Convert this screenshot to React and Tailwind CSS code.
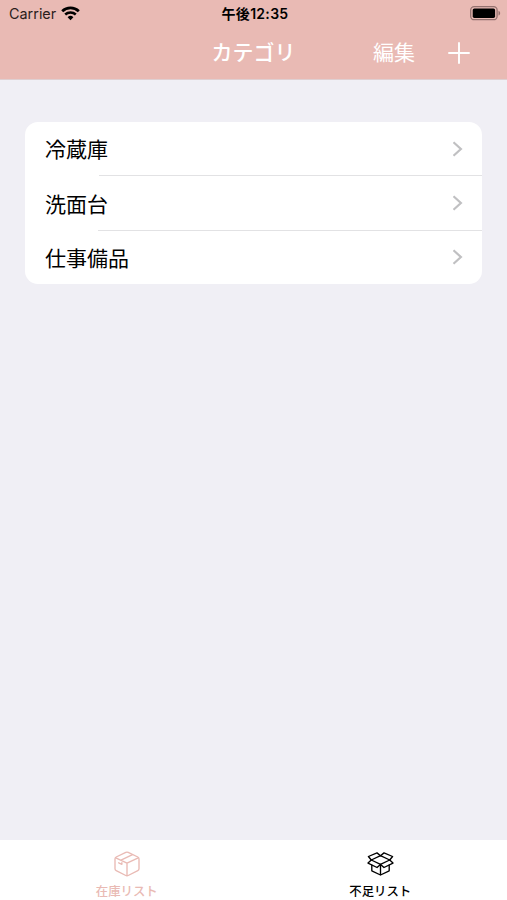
import React, { useState } from "react";

const categories = [
  { id: 1, name: "冷蔵庫", line: "ml-[74px]" },
  { id: 2, name: "洗面台", line: "ml-[73px]" },
  { id: 3, name: "仕事備品", line: "" },
];

const WifiIcon = () => (
  <svg width="19" height="15" viewBox="0 0 19 15" fill="none" stroke="#000">
    <path d="M1.2 5.2a12 12 0 0 1 16.6 0" strokeWidth="2.8" />
    <path d="M4.2 8.5a7.8 7.8 0 0 1 10.6 0" strokeWidth="2.5" />
    <path d="M9.5 14.2 6.6 11.2a4.2 4.2 0 0 1 5.8 0Z" fill="#000" stroke="none" />
  </svg>
);

const BatteryIcon = () => (
  <svg width="31" height="15" viewBox="0 0 31 15" fill="none">
    <rect x="0.7" y="0.7" width="26.4" height="13" rx="3.5" stroke="#94716f" strokeWidth="1.3" />
    <rect x="2.7" y="2.5" width="22.4" height="9.4" rx="1.6" fill="#000" />
    <path d="M28.5 4.8c2.2 1 2.2 3.9 0 4.8Z" fill="#94716f" />
  </svg>
);

const BoxIcon = () => (
  <svg width="26" height="26" viewBox="0 0 26 26" fill="none" stroke="currentColor" strokeWidth="1.35" strokeLinejoin="round" strokeLinecap="round">
    <path d="M11.8 1.4Q13 .8 14.2 1.4L23.8 6Q25 6.6 25 8V17.8Q25 19 23.8 19.6L14.2 24.5Q13 25.1 11.8 24.5L2.2 19.6Q1 19 1 17.8V8Q1 6.6 2.2 6Z" />
    <path d="M1.8 6.9 13 12.1 24.2 6.9M13 12.1V24.5M7 9.2 18.5 3.7M4.7 11.8l3.2 1.5v-1.6" />
  </svg>
);

const OpenBoxIcon = () => (
  <svg width="27" height="24" viewBox="0 0 27 24" fill="none" stroke="currentColor" strokeWidth="1.35" strokeLinejoin="round" strokeLinecap="round">
    <path d="M13.5 3.7 22.7 8 13.5 12.4 4.3 8Z" />
    <path d="M4.3 8 1.4 4.5 10 .9 13.5 3.7 17 .9 25.6 4.5 22.7 8" />
    <path d="M4.3 8 1 11.1 10 15.5 13.5 12.4 17 15.5 26 11.1 22.7 8" />
    <path d="M4.8 13.2V18.8L13.5 23 22.2 18.8V13.2M13.5 12.4V23" />
  </svg>
);

const App = () => {
  const [activeTab, setActiveTab] = useState("stock");

  return (
    <div className="flex h-screen w-full flex-col bg-[#f0eff5] font-['Inter','Noto_Sans_CJK_JP',sans-serif]">
      <header className="h-20 shrink-0 border-b border-[#dfcfd1] bg-[#e9bab4]">
        <div className="grid h-[27px] grid-cols-3 items-center pl-[9px] pr-[6px] text-black">
          <div className="flex items-center gap-[5px]">
            <span className="pt-px text-[14.4px] leading-none text-[#2b1d1b]">Carrier</span>
            <WifiIcon />
          </div>
          <span className="whitespace-nowrap pt-px text-center text-[14px] font-semibold leading-none tracking-[0.3px]">
            午後12:35
          </span>
          <div className="flex justify-end">
            <BatteryIcon />
          </div>
        </div>
        <div className="grid h-[51px] grid-cols-3 items-center text-white">
          <span />
          <h1 className="text-center text-[21px] font-medium leading-none">カテゴリ</h1>
          <div className="flex items-center justify-end gap-[33px] pr-[37px]">
            <button className="text-[21px] leading-none">編集</button>
            <button aria-label="追加">
              <svg width="22" height="22" viewBox="0 0 22 22" stroke="currentColor" strokeWidth="1.9" strokeLinecap="round">
                <path d="M11 1v20M1 11h20" />
              </svg>
            </button>
          </div>
        </div>
      </header>

      <main className="flex-1 px-[25px] pt-[42px]">
        <ul className="overflow-hidden rounded-[13px] bg-white">
          {categories.map((item) => (
            <li key={item.id}>
              <div className="flex h-[53.4px] items-center justify-between pl-[20px] pr-[19px]">
                <span className="pt-[2px] text-[21px] leading-none text-black">{item.name}</span>
                <svg width="11" height="16" viewBox="0 0 11 16" fill="none" stroke="#c0c0c2" strokeWidth="2.2">
                  <path d="M1.5 1.3 8.9 8l-7.4 6.7" />
                </svg>
              </div>
              {item.line && <div className={`h-px bg-[#e2e2e4] ${item.line}`} />}
            </li>
          ))}
        </ul>
      </main>

      <nav className="grid h-[60px] shrink-0 grid-cols-2 bg-white text-[12.4px] font-medium">
        <button
          onClick={() => setActiveTab("stock")}
          className={`flex flex-col items-center pt-[10px] ${
            activeTab === "stock" ? "text-[#e9bab4]" : "text-black"
          }`}
        >
          <span className="flex h-[27px] items-center">
            <BoxIcon />
          </span>
          <span className="mt-[9px] leading-none">在庫リスト</span>
        </button>
        <button
          onClick={() => setActiveTab("shortage")}
          className={`flex flex-col items-center pt-[10px] ${
            activeTab === "shortage" ? "text-[#e9bab4]" : "text-black"
          }`}
        >
          <span className="flex h-[27px] items-center">
            <OpenBoxIcon />
          </span>
          <span className="mt-[9px] leading-none">不足リスト</span>
        </button>
      </nav>
    </div>
  );
};

export default App;
